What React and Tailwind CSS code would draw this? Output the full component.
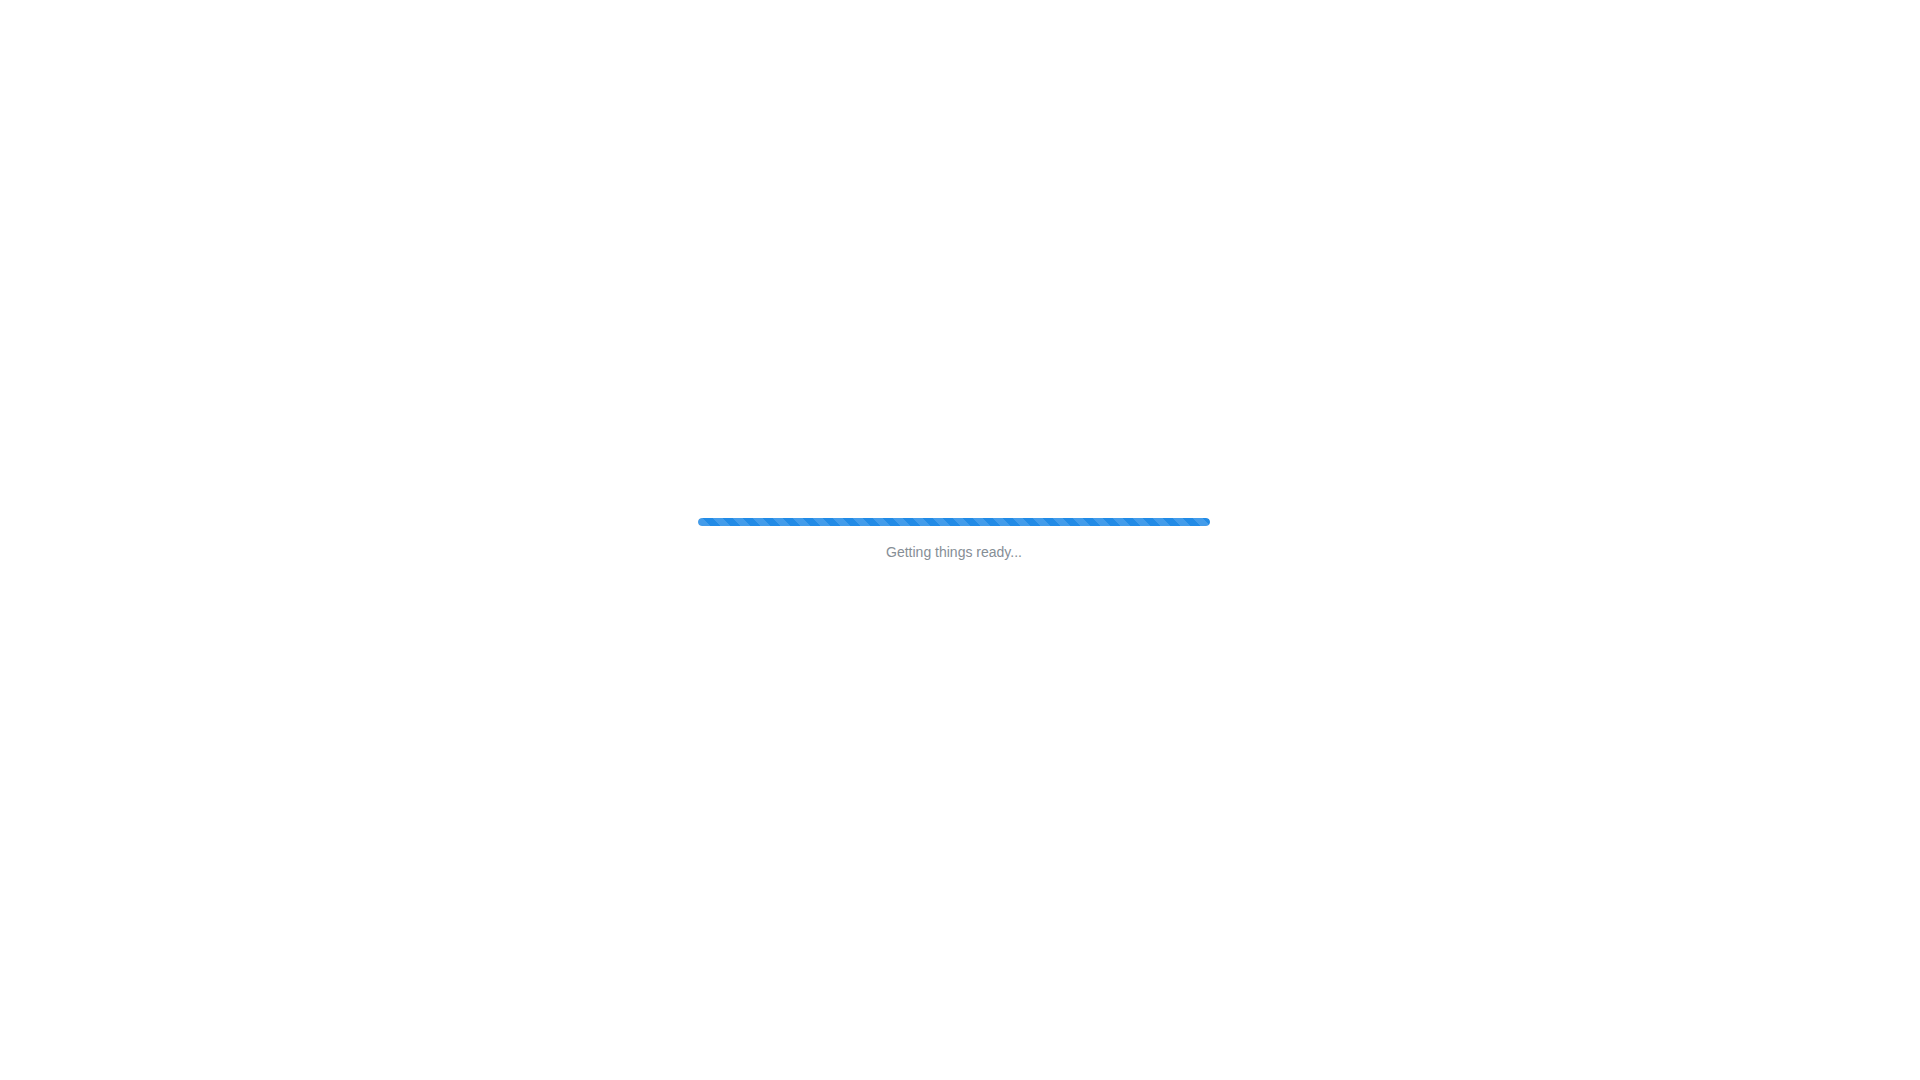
export default function App() {
  return (
    <main className="flex min-h-screen items-center justify-center bg-white pr-3 font-['Liberation_Sans',Arial,sans-serif]">
      <div className="flex w-full max-w-lg flex-col gap-4">
        <div
          role="progressbar"
          aria-labelledby="loading-label"
          className="h-2 overflow-hidden rounded bg-[#e9ecef]"
        >
          <div className="h-full w-full rounded bg-[#228be6] bg-[linear-gradient(45deg,rgba(255,255,255,0.15)_25%,transparent_25%,transparent_50%,rgba(255,255,255,0.15)_50%,rgba(255,255,255,0.15)_75%,transparent_75%,transparent)] bg-[length:20px_20px] bg-[position:-5px_0]" />
        </div>
        <p id="loading-label" className="text-center text-sm text-[#868e96]">
          Getting things ready...
        </p>
      </div>
    </main>
  );
}
